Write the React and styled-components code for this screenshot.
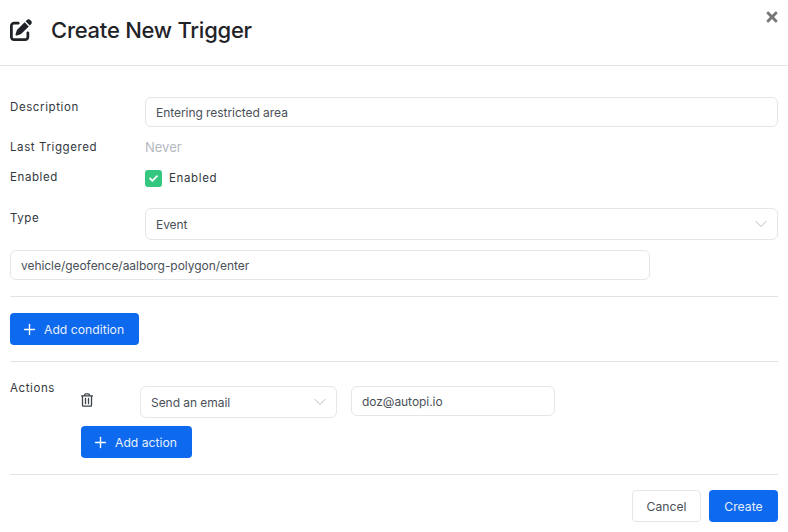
import React from 'react';
import styled, { createGlobalStyle } from 'styled-components';
import { FaTimes, FaRegTrashAlt, FaCheck } from 'react-icons/fa';
import { FaPenToSquare } from 'react-icons/fa6';
import { FiChevronDown, FiPlus } from 'react-icons/fi';

function App() {
  return (
    <>
      <GlobalStyle />
      <Modal>
        <Header>
          <FaPenToSquare />
          <Title>Create New Trigger</Title>
          <CloseButton>
            <FaTimes />
          </CloseButton>
        </Header>
        <Body>
          <Row height={30} mb={5}>
            <Label>Description</Label>
            <Input>Entering restricted area</Input>
          </Row>
          <Row height={30} mb={0} center>
            <Label center>Last Triggered</Label>
            <Never>Never</Never>
          </Row>
          <Row height={30} mb={16} center>
            <Label center>Enabled</Label>
            <CheckLabel>
              <CheckBox>
                <FaCheck />
              </CheckBox>
              Enabled
            </CheckLabel>
          </Row>
          <Row height={32} mb={10}>
            <Label>Type</Label>
            <Select>
              Event
              <FiChevronDown />
            </Select>
          </Row>
          <Input width="640px">vehicle/geofence/aalborg-polygon/enter</Input>
          <Divider top={16} bottom={16} />
          <Button>
            <FiPlus />
            Add condition
          </Button>
          <Divider top={16} bottom={24} />
          <ActionsRow>
            <ActionsLabel>Actions</ActionsLabel>
            <ActionsBody>
              <ActionLine>
                <TrashIcon>
                  <FaRegTrashAlt />
                </TrashIcon>
                <Select width="197px">
                  Send an email
                  <FiChevronDown />
                </Select>
                <Input width="204px">doz@autopi.io</Input>
              </ActionLine>
              <Button>
                <FiPlus />
                Add action
              </Button>
            </ActionsBody>
          </ActionsRow>
          <Divider top={16} bottom={15} />
          <Footer>
            <CancelButton>Cancel</CancelButton>
            <CreateButton>Create</CreateButton>
          </Footer>
        </Body>
      </Modal>
    </>
  );
}

const GlobalStyle = createGlobalStyle`
  * {
    box-sizing: border-box;
  }
  body {
    margin: 0;
    background: #fff;
    font-family: Inter, "Noto Sans", sans-serif;
    color: #495057;
  }
`;

const Modal = styled.div`
  width: 788px;
  height: 532px;
  background: #fff;
  overflow: hidden;
`;

const Header = styled.div`
  position: relative;
  display: flex;
  align-items: center;
  height: 66px;
  padding: 0 10px 5px;
  border-bottom: 1px solid #e2e3e5;
  svg {
    width: 22px;
    height: 22px;
    color: #1f2328;
  }
`;

const Title = styled.h1`
  margin: 0 0 0 19px;
  font-size: 22px;
  font-weight: 500;
  letter-spacing: -0.25px;
  color: #1f2328;
`;

const CloseButton = styled.span`
  position: absolute;
  top: 9px;
  right: 9px;
  display: flex;
  svg {
    width: 14px;
    height: 16px;
    color: #777;
  }
`;

const Body = styled.div`
  padding: 31px 10px 0;
`;

const Row = styled.div`
  display: flex;
  align-items: ${({ center }) => (center ? 'center' : 'flex-start')};
  height: ${({ height }) => height}px;
  margin-bottom: ${({ mb }) => mb}px;
`;

const Label = styled.label`
  flex: 0 0 135px;
  padding-top: ${({ center }) => (center ? '0' : '2px')};
  font-size: 11.5px;
  font-weight: 400;
  line-height: 16px;
  letter-spacing: 0.6px;
  color: #33383e;
`;

const Input = styled.div`
  display: flex;
  align-items: center;
  flex: ${({ width }) => (width ? `0 0 ${width}` : '1')};
  width: ${({ width }) => width || 'auto'};
  height: 30px;
  padding: 0 10px;
  background: #fff;
  border: 1px solid #e4e6eb;
  border-radius: 6px;
  font-size: 12px;
  letter-spacing: -0.05px;
  color: #495057;
`;

const Select = styled(Input)`
  justify-content: space-between;
  height: 32px;
  padding-right: 6px;
  svg {
    width: 20px;
    height: 20px;
    stroke-width: 1;
    color: #a9adb3;
  }
`;

const Never = styled.span`
  font-size: 13px;
  color: #b4b9bf;
`;

const CheckLabel = styled.span`
  display: flex;
  align-items: center;
  gap: 7px;
  margin-top: 2px;
  font-size: 11.5px;
  font-weight: 400;
  letter-spacing: 0.65px;
  color: #33383e;
`;

const CheckBox = styled.span`
  display: flex;
  align-items: center;
  justify-content: center;
  width: 17px;
  height: 17px;
  border-radius: 3px;
  background: #34c77f;
  svg {
    width: 9px;
    height: 9px;
    color: #fff;
  }
`;

const Divider = styled.hr`
  height: 1px;
  margin: ${({ top }) => top}px 0 ${({ bottom }) => bottom}px;
  border: 0;
  background: #e2e3e5;
`;

const Button = styled.button`
  display: inline-flex;
  align-items: center;
  gap: 6px;
  height: 32px;
  padding: 0 15px 0 11px;
  border: 0;
  border-radius: 4px;
  background: #0d69ee;
  color: #e6effd;
  font-family: inherit;
  font-size: 12.2px;
  vertical-align: top;
  svg {
    width: 17px;
    height: 17px;
    color: #fff;
    stroke-width: 2;
  }
`;

const ActionsRow = styled.div`
  display: flex;
  align-items: flex-start;
`;

const ActionsLabel = styled(Label)`
  flex: 0 0 71px;
  padding-top: 0;
  margin-top: -6px;
`;

const ActionsBody = styled.div`
  display: flex;
  flex-direction: column;
  align-items: flex-start;
  gap: 8px;
`;

const ActionLine = styled.div`
  display: flex;
  align-items: flex-start;
  gap: 14px;
`;

const TrashIcon = styled.span`
  display: flex;
  width: 59px;
  margin-right: -14px;
  padding-top: 7px;
  svg {
    width: 12px;
    height: 14px;
    color: #3f444a;
  }
`;

const Footer = styled.div`
  display: flex;
  justify-content: flex-end;
  gap: 8px;
`;

const CancelButton = styled.button`
  width: 69px;
  height: 32px;
  border: 1px solid #e4e6eb;
  border-radius: 4px;
  background: #fff;
  color: #495057;
  font-family: inherit;
  font-size: 12.2px;
`;

const CreateButton = styled(Button)`
  justify-content: center;
  width: 69px;
  padding: 0;
`;

export default App;
